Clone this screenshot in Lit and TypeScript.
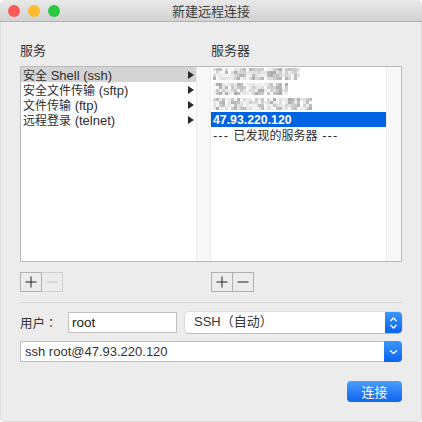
import { LitElement, html, css, svg } from "lit";
import { customElement } from "lit/decorators.js";

const services = ["安全 Shell (ssh)", "安全文件传输 (sftp)", "文件传输 (ftp)", "远程登录 (telnet)"];

type Cell = { x: number; y: number; f: string };

function mosaic(): Cell[] {
  const cells: Cell[] = [];
  let seed = 7;
  const rnd = () => {
    seed = (seed * 1103515 + 12345) % 2147483;
    return seed / 2147483;
  };
  const rows: [number, number][] = [
    [1, 86],
    [16, 75],
    [31, 97],
  ];
  for (const [top, width] of rows) {
    for (let x = 0; x < width; x += 3) {
      const gap = x % 18 > 14;
      for (let y = 0; y < 4; y++) {
        const v = gap ? 228 + rnd() * 27 : 172 + rnd() * 80;
        const c = Math.round(v);
        cells.push({ x, y: top + y * 3, f: `rgb(${c},${c},${c})` });
      }
    }
  }
  return cells;
}

const cells = mosaic();

function mixed(text: string) {
  return text
    .split(/([\u4e00-\u9fff]+)/)
    .filter((p) => p)
    .map((p) => (/[\u4e00-\u9fff]/.test(p) ? html`<span class="cjk">${p}</span>` : p));
}

@customElement("app-root")
export class AppRoot extends LitElement {
  static styles = css`
    :host { display: block; width: 422px; height: 422px; background: #fff; font-family: "Liberation Sans", "Noto Sans CJK SC", sans-serif; }
    .win { width: 422px; height: 422px; box-sizing: border-box; background: #ececec; border-radius: 5px; box-shadow: inset 0 0 0 1px #dedede; display: flex; flex-direction: column; overflow: hidden; }
    .title { height: 22px; flex: none; box-sizing: border-box; background: linear-gradient(#e9e9e9, #d2d2d2); border-bottom: 1px solid #b1b1b1; display: flex; align-items: center; justify-content: center; position: relative; font-size: 13px; color: #3c3c3c; }
    .lights { position: absolute; left: 8px; top: 5px; display: flex; gap: 8px; }
    .dot { width: 12px; height: 12px; border-radius: 50%; }
    .r { background: #fc5b57; } .y { background: #fdbb2e; } .g { background: #2bc840; }
    .body { flex: 1; padding: 20px 20px 0 20px; display: flex; flex-direction: column; font-size: 13px; color: #2e2e2e; }
    .cjk { font-size: 12px; }
    .heads { display: flex; height: 17px; align-items: center; font-size: 13px; line-height: 17px; color: #333; }
    .heads span { display: block; height: 17px; }
    .heads span:first-child { width: 191px; }
    .list { margin-top: 7px; height: 196px; display: flex; background: #fff; border: 1px solid #bababa; box-sizing: border-box; width: 382px; }
    .col1 { width: 175px; flex: none; }
    .row { height: 15px; box-sizing: border-box; padding: 1px 2px 0 2px; display: flex; justify-content: space-between; white-space: nowrap; }
    .row .label { display: block; height: 14px; line-height: 15px; }
    .row.sel { background: #d4d4d4; }
    .tri { width: 6px; height: 8px; margin-top: 3px; }
    .gutter { width: 15px; flex: none; background: #f8f8f8; border-left: 1px solid #ececec; border-right: 1px solid #ececec; box-sizing: border-box; }
    .col2 { flex: 1; position: relative; }
    .gutter2 { width: 15px; flex: none; background: #f8f8f8; border-left: 1px solid #ececec; box-sizing: border-box; }
    .srow { height: 15px; box-sizing: border-box; padding: 1px 2px 0; line-height: 15px; white-space: nowrap; }
    .srow.sel { background: #0063e1; color: #fff; font-weight: 700; font-size: 12.3px; }
    .dash { letter-spacing: 1px; }
    .blur { height: 45px; position: relative; overflow: hidden; }
    .blur svg { position: absolute; left: 2px; top: 0; filter: blur(0.7px); }
    .tools { display: flex; margin-top: 10px; height: 20px; }
    .tools .a { width: 191px; display: flex; }
    .tb { width: 22px; height: 20px; box-sizing: border-box; border: 1px solid #b0b0b0; background: #ececec; display: flex; align-items: center; justify-content: center; }
    .tb + .tb { margin-left: -1px; }
    .tb.off { border-color: #cfcfcf; border-left-color: #b0b0b0; }
    .sep { height: 1px; background: #d6d6d6; margin-top: 10px; width: 382px; }
    .urow { display: flex; align-items: center; margin-top: 9px; height: 21px; }
    .ulabel { width: 48px; font-size: 12.5px; line-height: 17px; height: 17px; color: #333; white-space: nowrap; }
    .colon { font-family: "Noto Sans CJK TC", sans-serif; font-size: 12px; }
    .ifake { width: 109px; height: 21px; box-sizing: border-box; background: #fff; border: 1px solid #c0c0c0; padding: 0 3px; line-height: 19px; font-size: 13.5px; color: #222; }
    .sel-box { margin-left: 8px; flex: 1; height: 21px; display: flex; background: #fff; border-radius: 4px; box-shadow: 0 0 0 0.5px #cccccc, 0 1px 0 #b5b5b5; overflow: hidden; }
    .sel-text { flex: 1; padding-left: 9px; line-height: 20px; font-size: 13px; color: #333; }
    .arrow { width: 17px; flex: none; background: linear-gradient(#3c98fc, #0a62f0); display: flex; align-items: center; justify-content: center; }
    .combo { margin-top: 8px; height: 21px; display: flex; width: 382px; }
    .ctext { flex: 1; background: #fff; border: 1px solid #c0c0c0; border-right: none; box-sizing: border-box; padding-left: 4px; line-height: 19px; font-size: 13px; color: #333; }
    .carrow { width: 18px; border-radius: 0 4px 4px 0; background: linear-gradient(#3c98fc, #0a62f0); display: flex; align-items: center; justify-content: center; }
    .foot { display: flex; justify-content: flex-end; margin-top: 19px; }
    .btn { width: 55px; height: 21px; border-radius: 4px; background: linear-gradient(#4c9dfb, #0d65f2); color: #fff; font-size: 13px; display: flex; align-items: center; justify-content: center; }
  `;

  private tri() {
    return html`<svg class="tri" viewBox="0 0 6 8"><path d="M0 0L6 4L0 8Z" fill="#2a2a2a"/></svg>`;
  }

  private plus(c: string) {
    return html`<svg width="12" height="12" viewBox="0 0 12 12"><path d="M0.5 6H11.5M6 0.5V11.5" stroke="${c}" stroke-width="1"/></svg>`;
  }

  private minus(c: string) {
    return html`<svg width="12" height="12" viewBox="0 0 12 12"><path d="M0.5 6H11.5" stroke="${c}" stroke-width="1"/></svg>`;
  }

  render() {
    return html`<div class="win">
      <div class="title">
        <div class="lights"><div class="dot r"></div><div class="dot y"></div><div class="dot g"></div></div>
        新建远程连接
      </div>
      <div class="body">
        <div class="heads"><span>服务</span><span>服务器</span></div>
        <div class="list">
          <div class="col1">
            ${services.map((s, i) => html`<div class="row ${i === 0 ? "sel" : ""}"><span class="label">${mixed(s)}</span>${this.tri()}</div>`)}
          </div>
          <div class="gutter"></div>
          <div class="col2">
            <div class="blur"><svg width="110" height="45" viewBox="0 0 110 45">${cells.map((c) => svg`<rect x="${c.x}" y="${c.y}" width="3" height="3" fill="${c.f}"/>`)}</svg></div>
            <div class="srow sel">47.93.220.120</div>
            <div class="srow"><span class="dash">--- </span><span class="cjk">已发现的服务器</span><span class="dash"> ---</span></div>
          </div>
          <div class="gutter2"></div>
        </div>
        <div class="tools">
          <div class="a"><div class="tb">${this.plus("#222")}</div><div class="tb off">${this.minus("#c4c4c4")}</div></div>
          <div class="a"><div class="tb">${this.plus("#222")}</div><div class="tb">${this.minus("#222")}</div></div>
        </div>
        <div class="sep"></div>
        <div class="urow">
          <div class="ulabel">用户<span class="colon">：</span></div>
          <div class="ifake">root</div>
          <div class="sel-box">
            <div class="sel-text">SSH（自动）</div>
            <div class="arrow"><svg width="9" height="14" viewBox="0 0 9 14"><path d="M1.5 5L4.5 2L7.5 5M1.5 9L4.5 12L7.5 9" fill="none" stroke="#fff" stroke-width="1.3"/></svg></div>
          </div>
        </div>
        <div class="combo">
          <div class="ctext">ssh root@47.93.220.120</div>
          <div class="carrow"><svg width="9" height="6" viewBox="0 0 9 6"><path d="M1 1.5L4.5 4.5L8 1.5" fill="none" stroke="#fff" stroke-width="1.3"/></svg></div>
        </div>
        <div class="foot"><div class="btn">连接</div></div>
      </div>
    </div>`;
  }
}
